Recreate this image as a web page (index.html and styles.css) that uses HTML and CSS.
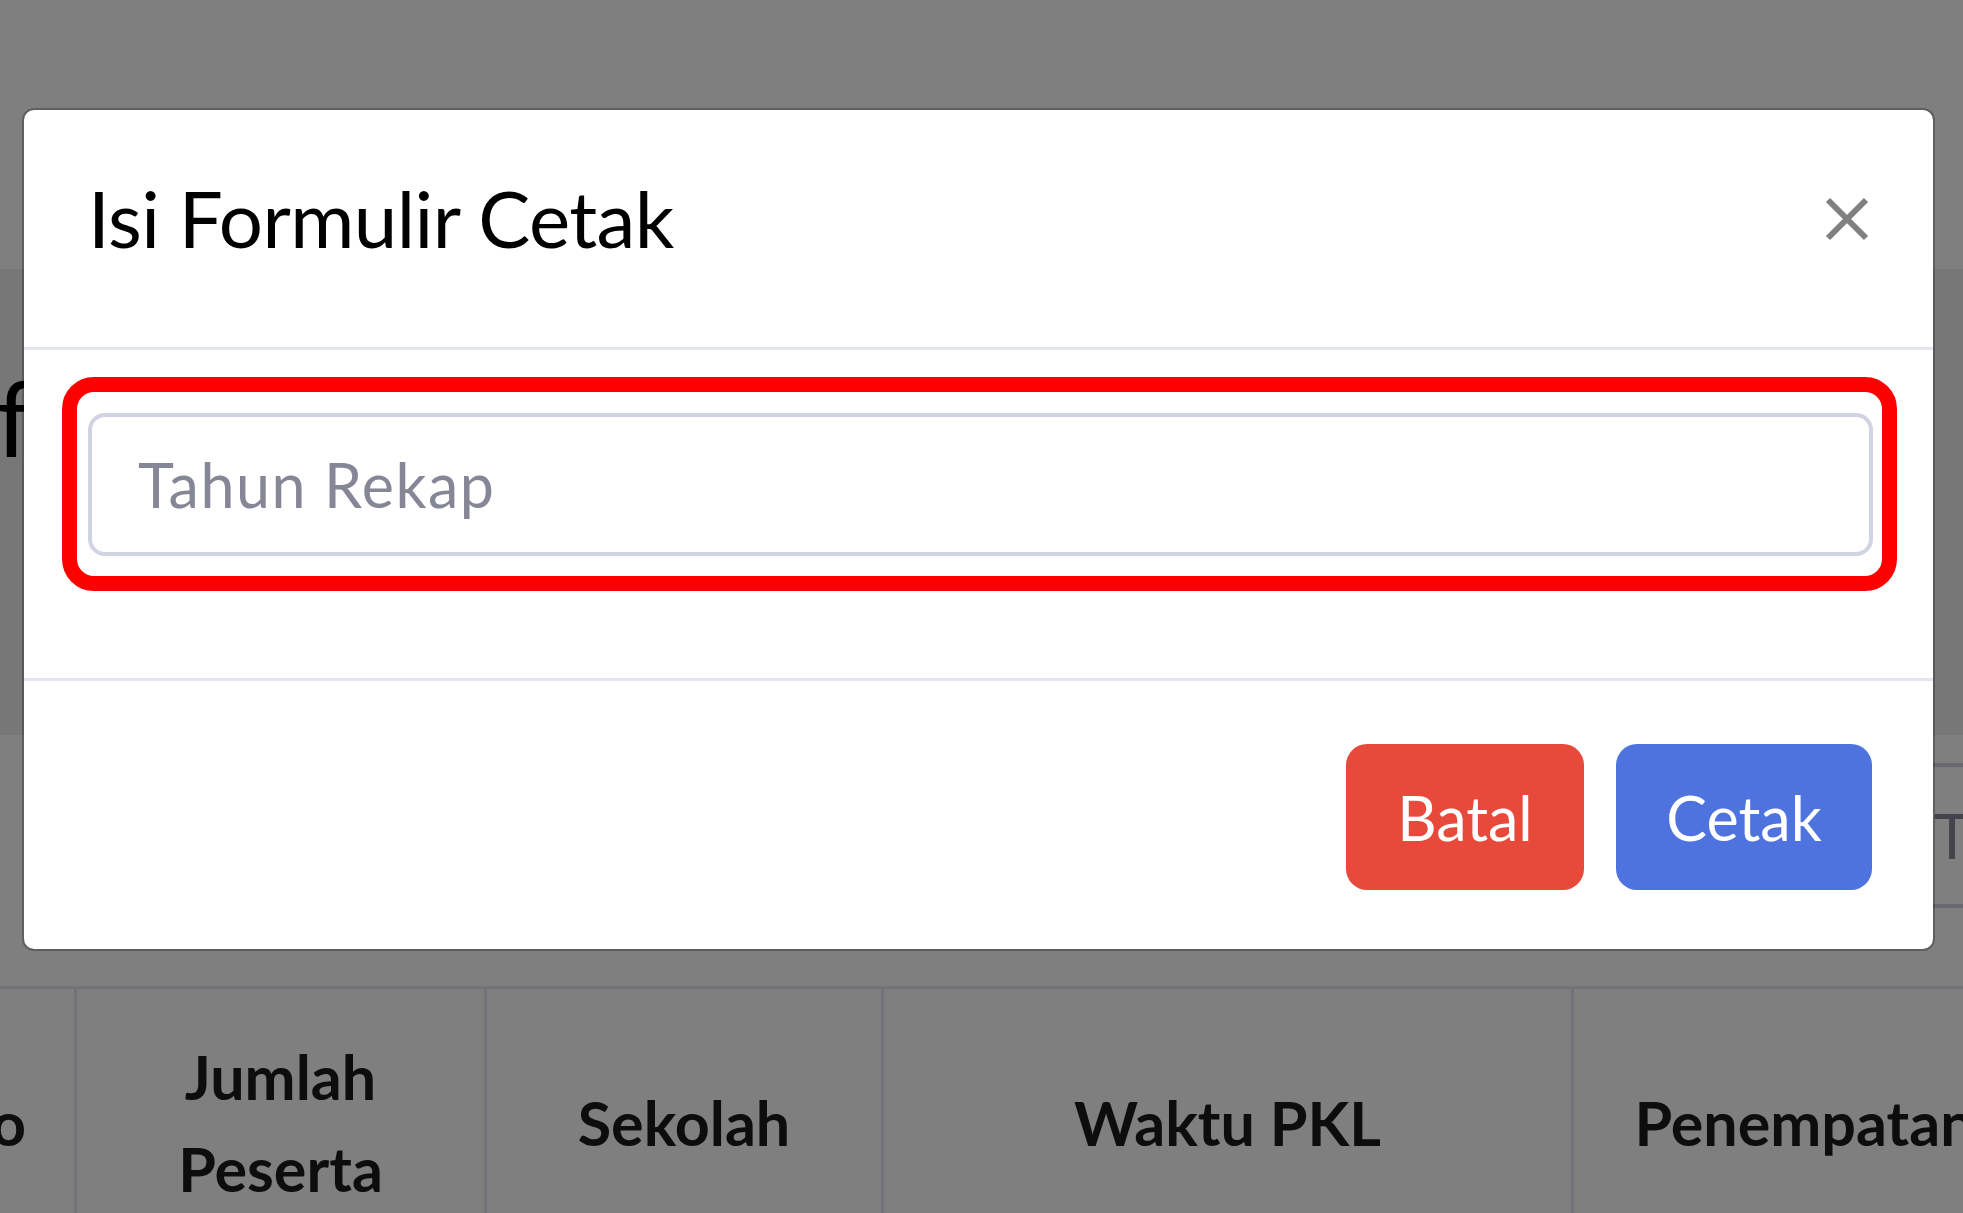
FILE: index.html
```html
<!DOCTYPE html>
<html lang="id">
<head>
<meta charset="utf-8">
<title>Isi Formulir Cetak</title>
<link rel="stylesheet" href="styles.css">
</head>
<body>
<div class="page">
  <div class="topbar"></div>
  <div class="band">
    <h1 class="page-heading">f</h1>
  </div>
  <div class="filter-row">
    <input class="filter-input" type="text" placeholder="Tahun">
  </div>
  <table class="data-table">
    <thead>
      <tr>
        <th class="col-no">No</th>
        <th class="col-jumlah">Jumlah Peserta</th>
        <th class="col-sekolah">Sekolah</th>
        <th class="col-waktu">Waktu PKL</th>
        <th class="col-penempatan">Penempatan</th>
      </tr>
    </thead>
  </table>
</div>

<div class="backdrop"></div>

<div class="modal">
  <div class="modal-content">
    <div class="modal-header">
      <h5 class="modal-title">Isi Formulir Cetak</h5>
      <button class="close" type="button" aria-label="Close">
        <svg class="close-icon" viewBox="0 0 44 44" width="44" height="44">
          <path d="M3 3 L41 41 M41 3 L3 41" stroke="#808080" stroke-width="6" fill="none"/>
        </svg>
      </button>
    </div>
    <div class="modal-body">
      <div class="field">
        <input class="form-control" type="text" placeholder="Tahun Rekap">
        <span class="highlight"></span>
      </div>
    </div>
    <div class="modal-footer">
      <button class="btn btn-danger btn-batal" type="button">Batal</button>
      <button class="btn btn-primary btn-cetak" type="button">Cetak</button>
    </div>
  </div>
</div>
</body>
</html>
```

FILE: styles.css
```css
html, body {
  margin: 0;
  padding: 0;
  background: #ffffff;
}

body {
  width: 1963px;
  height: 1213px;
  overflow: hidden;
  font-family: "Nunito", Lato, "Open Sans", sans-serif;
}

.page {
  width: 1963px;
  height: 1213px;
  overflow: hidden;
  display: flex;
  flex-direction: column;
}

.topbar {
  height: 269px;
  background: #ffffff;
  flex: none;
}

.band {
  height: 466px;
  background: #eeeeee;
  flex: none;
  padding-top: 96px;
  box-sizing: border-box;
}

.page-heading {
  margin: 0 0 0 -4px;
  font-family: Lato, sans-serif;
  font-weight: 400;
  font-size: 104px;
  line-height: 1;
  color: #000000;
}

.filter-row {
  flex: none;
  height: 251px;
  box-sizing: border-box;
  padding-top: 28px;
  background: #ffffff;
}

.filter-input {
  display: block;
  margin-left: 1884px;
  width: 600px;
  height: 145px;
  box-sizing: border-box;
  border: 4px solid #d1d3e2;
  border-radius: 17px;
  padding: 0 46px;
  font-family: Lato, sans-serif;
  font-size: 61px;
  background: #ffffff;
}

.filter-input::placeholder {
  color: #858796;
}

.data-table {
  flex: none;
  align-self: flex-start;
  margin-left: -106px;
  border-collapse: collapse;
  table-layout: fixed;
  width: 2141px;
  background: #ffffff;
}

.data-table th {
  border: 3px solid #e3e6f0;
  padding: 42px 46px 50px;
  font-family: Lato, sans-serif;
  font-weight: 700;
  font-size: 61px;
  line-height: 91.5px;
  color: #1a1a1a;
  text-align: center;
  vertical-align: middle;
}

.col-no { width: 85px; }
.col-jumlah { width: 315px; }
.col-sekolah { width: 302px; }
.col-waktu { width: 595px; }
.col-penempatan { width: 369px; }

.backdrop {
  position: fixed;
  inset: 0;
  background: rgba(0, 0, 0, 0.5);
}

.modal {
  position: fixed;
  left: 22px;
  top: 108px;
  width: 1913px;
}

.modal-content {
  background: #ffffff;
  background-clip: padding-box;
  border: 2px solid rgba(0, 0, 0, 0.25);
  border-radius: 12px;
  display: flex;
  flex-direction: column;
}

.modal-header {
  display: flex;
  justify-content: space-between;
  align-items: flex-start;
  padding: 51px 64px 71px;
  border-bottom: 3px solid #e3e6f0;
}

.modal-title {
  margin: 0;
  font-family: Lato, sans-serif;
  font-weight: 400;
  font-size: 78px;
  letter-spacing: -0.6px;
  line-height: 115px;
  color: #000000;
}

.close {
  margin-top: 36px;
  margin-right: 0;
  padding: 0;
  border: 0;
  background: transparent;
  width: 44px;
  height: 44px;
  display: flex;
}

.close-icon {
  display: block;
}

.modal-body {
  padding: 63px 60px 61px 64px;
}

.field {
  position: relative;
  margin-bottom: 61px;
}

.form-control {
  display: block;
  width: 100%;
  height: 143px;
  box-sizing: border-box;
  border: 4px solid #d1d3e2;
  border-radius: 17px;
  padding: 0 46px;
  font-family: Lato, sans-serif;
  font-size: 61px;
  letter-spacing: 1.5px;
  color: #6e707e;
  background: #ffffff;
}

.form-control::placeholder {
  color: #858796;
}

.highlight {
  position: absolute;
  top: -36px;
  bottom: -35px;
  left: -26px;
  right: -24px;
  border: 15px solid #ff0000;
  border-radius: 32px;
  pointer-events: none;
}

.modal-footer {
  display: flex;
  justify-content: flex-end;
  gap: 32px;
  padding: 63px 61px 59px;
  border-top: 3px solid #e3e6f0;
}

.btn {
  height: 146px;
  border: 0;
  border-radius: 21px;
  padding: 0;
  font-family: Lato, sans-serif;
  font-weight: 400;
  font-size: 61px;
  color: #ffffff;
  display: flex;
  align-items: center;
  justify-content: center;
}

.btn-danger {
  background: #e74a3b;
}

.btn-primary {
  background: #4e73df;
}

.btn-batal { width: 238px; }
.btn-cetak { width: 256px; }
```
